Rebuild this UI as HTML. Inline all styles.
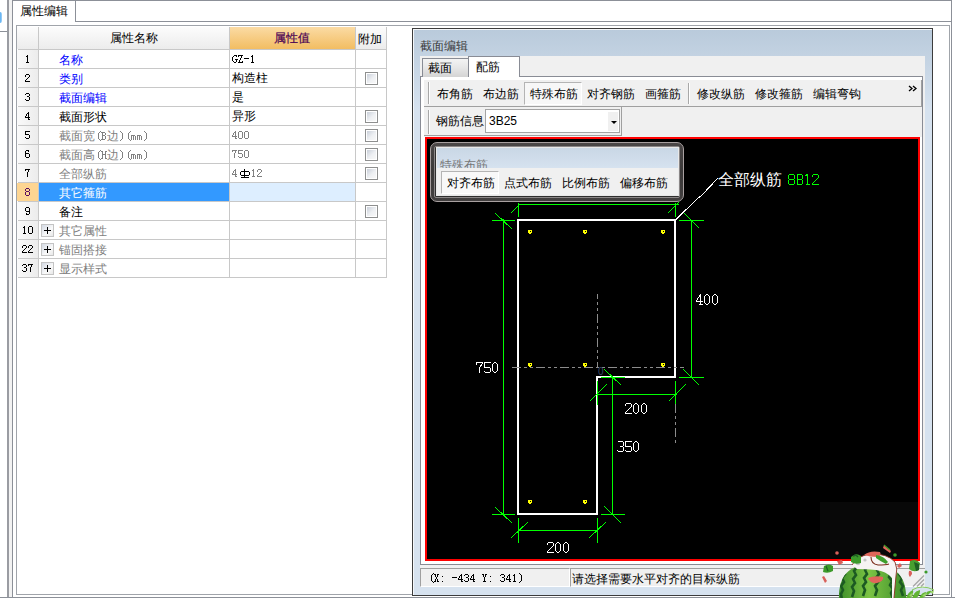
<!DOCTYPE html>
<html><head><meta charset="utf-8">
<style>
*{margin:0;padding:0;box-sizing:border-box}
html,body{width:955px;height:598px;overflow:hidden;background:#fff;position:relative}
.a{position:absolute}
.t{position:absolute;font-family:"Liberation Sans",sans-serif;font-size:12px;line-height:12px;white-space:nowrap;color:#000}
.m{position:absolute;font-family:"Liberation Mono",monospace;font-size:10px;line-height:12px;white-space:nowrap;color:#000}
.h{position:absolute;height:1px}
.v{position:absolute;width:1px}
.cb{position:absolute;width:13px;height:13px;border:1px solid #8e8f8f;background:#fff;padding:1px}.cb i{display:block;width:9px;height:9px;background:linear-gradient(135deg,#c9cfd9,#eef0f3 55%,#f8f8f8)}
</style></head><body>

<div class="v" style="left:7px;top:0px;height:598px;width:2px;background:#9a9ca2"></div>
<div class="a" style="left:9px;top:0px;width:3px;height:598px;background:#f2f2f2"></div>
<div class="v" style="left:12px;top:0px;height:598px;width:1px;background:#8c9098"></div>
<div class="h" style="left:0px;top:31px;width:7px;height:1px;background:#8c9098"></div>
<div class="a" style="left:0px;top:12px;width:2px;height:11px;background:linear-gradient(90deg,#46a4f0,#9ccff6);border-radius:0 2px 2px 0;opacity:0.9"></div>
<div class="h" style="left:0px;top:597px;width:955px;height:1px;background:#8c9098"></div>
<div class="h" style="left:12px;top:0px;width:940px;height:1px;background:#8c9098"></div>
<div class="v" style="left:951px;top:0px;height:598px;width:1px;background:#8c9098"></div>
<div class="v" style="left:75px;top:1px;height:21px;width:1px;background:#8c9098"></div>
<div class="h" style="left:75px;top:21px;width:877px;height:1px;background:#8c9098"></div>
<div class="t" style="left:20px;top:5px;">属性编辑</div>
<div class="a" style="left:16px;top:25px;width:934px;height:570px;border:1px solid #a0a4aa"></div>
<div class="a" style="left:17px;top:27px;width:21px;height:22px;background:linear-gradient(#fcfcfc,#ececec)"></div>
<div class="a" style="left:39px;top:27px;width:190px;height:22px;background:linear-gradient(#fcfcfc,#ececec)"></div>
<div class="a" style="left:230px;top:27px;width:125px;height:22px;background:linear-gradient(#fbdba4,#f2bd62)"></div>
<div class="a" style="left:356px;top:27px;width:30px;height:22px;background:linear-gradient(#fcfcfc,#ececec)"></div>
<div class="a" style="left:17px;top:50px;width:21px;height:18px;background:linear-gradient(90deg,#fafafa,#ececec)"></div>
<div class="a" style="left:17px;top:69px;width:21px;height:18px;background:linear-gradient(90deg,#fafafa,#ececec)"></div>
<div class="a" style="left:17px;top:88px;width:21px;height:18px;background:linear-gradient(90deg,#fafafa,#ececec)"></div>
<div class="a" style="left:17px;top:107px;width:21px;height:18px;background:linear-gradient(90deg,#fafafa,#ececec)"></div>
<div class="a" style="left:17px;top:126px;width:21px;height:18px;background:linear-gradient(90deg,#fafafa,#ececec)"></div>
<div class="a" style="left:17px;top:145px;width:21px;height:18px;background:linear-gradient(90deg,#fafafa,#ececec)"></div>
<div class="a" style="left:17px;top:164px;width:21px;height:18px;background:linear-gradient(90deg,#fafafa,#ececec)"></div>
<div class="a" style="left:17px;top:183px;width:21px;height:18px;background:linear-gradient(90deg,#fafafa,#ececec)"></div>
<div class="a" style="left:17px;top:202px;width:21px;height:18px;background:linear-gradient(90deg,#fafafa,#ececec)"></div>
<div class="a" style="left:17px;top:221px;width:21px;height:18px;background:linear-gradient(90deg,#fafafa,#ececec)"></div>
<div class="a" style="left:17px;top:240px;width:21px;height:18px;background:linear-gradient(90deg,#fafafa,#ececec)"></div>
<div class="a" style="left:17px;top:259px;width:21px;height:18px;background:linear-gradient(90deg,#fafafa,#ececec)"></div>
<div class="a" style="left:17px;top:183px;width:21px;height:18px;background:#fdd592"></div>
<div class="a" style="left:39px;top:183px;width:190px;height:18px;background:#3399ff"></div>
<div class="a" style="left:230px;top:183px;width:125px;height:18px;background:#ddeeff"></div>
<div class="h" style="left:18px;top:49px;width:368px;height:1px;background:#c8c8c8"></div>
<div class="h" style="left:18px;top:68px;width:368px;height:1px;background:#c8c8c8"></div>
<div class="h" style="left:18px;top:87px;width:368px;height:1px;background:#c8c8c8"></div>
<div class="h" style="left:18px;top:106px;width:368px;height:1px;background:#c8c8c8"></div>
<div class="h" style="left:18px;top:125px;width:368px;height:1px;background:#c8c8c8"></div>
<div class="h" style="left:18px;top:144px;width:368px;height:1px;background:#c8c8c8"></div>
<div class="h" style="left:18px;top:163px;width:368px;height:1px;background:#c8c8c8"></div>
<div class="h" style="left:18px;top:182px;width:368px;height:1px;background:#c8c8c8"></div>
<div class="h" style="left:18px;top:201px;width:368px;height:1px;background:#c8c8c8"></div>
<div class="h" style="left:18px;top:220px;width:368px;height:1px;background:#c8c8c8"></div>
<div class="h" style="left:18px;top:239px;width:368px;height:1px;background:#c8c8c8"></div>
<div class="h" style="left:18px;top:258px;width:368px;height:1px;background:#c8c8c8"></div>
<div class="h" style="left:18px;top:277px;width:368px;height:1px;background:#c8c8c8"></div>
<div class="v" style="left:38px;top:27px;height:251px;width:1px;background:#c8c8c8"></div>
<div class="v" style="left:229px;top:27px;height:251px;width:1px;background:#c8c8c8"></div>
<div class="v" style="left:355px;top:27px;height:251px;width:1px;background:#c8c8c8"></div>
<div class="v" style="left:386px;top:27px;height:251px;width:1px;background:#c8c8c8"></div>
<div class="t" style="left:110px;top:32px;">属性名称</div>
<div class="t" style="left:274px;top:32px;color:#4c0454;-webkit-text-stroke:0.2px #4c0454">属性值</div>
<div class="t" style="left:358px;top:33px;">附加</div>
<div class="t" style="left:59px;top:54px;color:#0000ff">名称</div>
<div class="t" style="left:59px;top:73px;color:#0000ff">类别</div>
<div class="t" style="left:232px;top:72px;color:#000">构造柱</div>
<div class="cb" style="left:365px;top:72px"><i></i></div>
<div class="t" style="left:59px;top:92px;color:#0000ff">截面编辑</div>
<div class="t" style="left:232px;top:91px;color:#000">是</div>
<div class="t" style="left:59px;top:111px;color:#000">截面形状</div>
<div class="t" style="left:232px;top:110px;color:#000">异形</div>
<div class="cb" style="left:365px;top:110px"><i></i></div>
<div class="t" style="left:59px;top:130px;color:#808080">截面宽</div>
<div class="t" style="left:107px;top:130px;color:#808080">边</div>
<div class="cb" style="left:365px;top:129px"><i></i></div>
<div class="t" style="left:59px;top:149px;color:#808080">截面高</div>
<div class="t" style="left:107px;top:149px;color:#808080">边</div>
<div class="cb" style="left:365px;top:148px"><i></i></div>
<div class="t" style="left:59px;top:168px;color:#808080">全部纵筋</div>
<div class="cb" style="left:365px;top:167px"><i></i></div>
<div class="t" style="left:59px;top:187px;color:#fff">其它箍筋</div>
<div class="t" style="left:59px;top:206px;color:#000">备注</div>
<div class="cb" style="left:365px;top:205px"><i></i></div>
<div class="t" style="left:59px;top:225px;color:#808080">其它属性</div>
<div class="a" style="left:41px;top:224px;width:13px;height:13px;border:1px solid #c4c4c4;background:linear-gradient(135deg,#d2d8e2,#fafafa 60%,#e8e8e8)"></div>
<div class="t" style="left:59px;top:244px;color:#808080">锚固搭接</div>
<div class="a" style="left:41px;top:243px;width:13px;height:13px;border:1px solid #c4c4c4;background:linear-gradient(135deg,#d2d8e2,#fafafa 60%,#e8e8e8)"></div>
<div class="t" style="left:59px;top:263px;color:#808080">显示样式</div>
<div class="a" style="left:41px;top:262px;width:13px;height:13px;border:1px solid #c4c4c4;background:linear-gradient(135deg,#d2d8e2,#fafafa 60%,#e8e8e8)"></div>
<svg class="a" style="left:0;top:0" width="955" height="598" shape-rendering="crispEdges"><g fill="#000"><rect x="27" y="55" width="1" height="1"/><rect x="26" y="56" width="1" height="1"/><rect x="27" y="56" width="1" height="1"/><rect x="27" y="57" width="1" height="1"/><rect x="27" y="58" width="1" height="1"/><rect x="27" y="59" width="1" height="1"/><rect x="27" y="60" width="1" height="1"/><rect x="27" y="61" width="1" height="1"/><rect x="26" y="62" width="1" height="1"/><rect x="27" y="62" width="1" height="1"/><rect x="28" y="62" width="1" height="1"/></g><g fill="#000"><rect x="234" y="55" width="1" height="1"/><rect x="235" y="55" width="1" height="1"/><rect x="236" y="55" width="1" height="1"/><rect x="233" y="56" width="1" height="1"/><rect x="236" y="56" width="1" height="1"/><rect x="232" y="57" width="1" height="1"/><rect x="232" y="58" width="1" height="1"/><rect x="232" y="59" width="1" height="1"/><rect x="235" y="59" width="1" height="1"/><rect x="236" y="59" width="1" height="1"/><rect x="237" y="59" width="1" height="1"/><rect x="232" y="60" width="1" height="1"/><rect x="236" y="60" width="1" height="1"/><rect x="233" y="61" width="1" height="1"/><rect x="236" y="61" width="1" height="1"/><rect x="234" y="62" width="1" height="1"/><rect x="235" y="62" width="1" height="1"/></g><g fill="#000"><rect x="238" y="55" width="1" height="1"/><rect x="239" y="55" width="1" height="1"/><rect x="240" y="55" width="1" height="1"/><rect x="241" y="55" width="1" height="1"/><rect x="242" y="55" width="1" height="1"/><rect x="238" y="56" width="1" height="1"/><rect x="241" y="56" width="1" height="1"/><rect x="241" y="57" width="1" height="1"/><rect x="240" y="58" width="1" height="1"/><rect x="240" y="59" width="1" height="1"/><rect x="239" y="60" width="1" height="1"/><rect x="239" y="61" width="1" height="1"/><rect x="242" y="61" width="1" height="1"/><rect x="238" y="62" width="1" height="1"/><rect x="239" y="62" width="1" height="1"/><rect x="240" y="62" width="1" height="1"/><rect x="241" y="62" width="1" height="1"/><rect x="242" y="62" width="1" height="1"/></g><g fill="#000"><rect x="244" y="58" width="1" height="1"/><rect x="245" y="58" width="1" height="1"/><rect x="246" y="58" width="1" height="1"/><rect x="247" y="58" width="1" height="1"/><rect x="248" y="58" width="1" height="1"/></g><g fill="#000"><rect x="252" y="55" width="1" height="1"/><rect x="251" y="56" width="1" height="1"/><rect x="252" y="56" width="1" height="1"/><rect x="252" y="57" width="1" height="1"/><rect x="252" y="58" width="1" height="1"/><rect x="252" y="59" width="1" height="1"/><rect x="252" y="60" width="1" height="1"/><rect x="252" y="61" width="1" height="1"/><rect x="251" y="62" width="1" height="1"/><rect x="252" y="62" width="1" height="1"/><rect x="253" y="62" width="1" height="1"/></g><g fill="#000"><rect x="26" y="74" width="1" height="1"/><rect x="27" y="74" width="1" height="1"/><rect x="28" y="74" width="1" height="1"/><rect x="25" y="75" width="1" height="1"/><rect x="29" y="75" width="1" height="1"/><rect x="25" y="76" width="1" height="1"/><rect x="29" y="76" width="1" height="1"/><rect x="28" y="77" width="1" height="1"/><rect x="27" y="78" width="1" height="1"/><rect x="26" y="79" width="1" height="1"/><rect x="25" y="80" width="1" height="1"/><rect x="25" y="81" width="1" height="1"/><rect x="26" y="81" width="1" height="1"/><rect x="27" y="81" width="1" height="1"/><rect x="28" y="81" width="1" height="1"/><rect x="29" y="81" width="1" height="1"/></g><g fill="#000"><rect x="26" y="93" width="1" height="1"/><rect x="27" y="93" width="1" height="1"/><rect x="28" y="93" width="1" height="1"/><rect x="25" y="94" width="1" height="1"/><rect x="29" y="94" width="1" height="1"/><rect x="29" y="95" width="1" height="1"/><rect x="27" y="96" width="1" height="1"/><rect x="28" y="96" width="1" height="1"/><rect x="29" y="97" width="1" height="1"/><rect x="29" y="98" width="1" height="1"/><rect x="25" y="99" width="1" height="1"/><rect x="29" y="99" width="1" height="1"/><rect x="26" y="100" width="1" height="1"/><rect x="27" y="100" width="1" height="1"/><rect x="28" y="100" width="1" height="1"/></g><g fill="#000"><rect x="28" y="112" width="1" height="1"/><rect x="27" y="113" width="1" height="1"/><rect x="28" y="113" width="1" height="1"/><rect x="26" y="114" width="1" height="1"/><rect x="28" y="114" width="1" height="1"/><rect x="26" y="115" width="1" height="1"/><rect x="28" y="115" width="1" height="1"/><rect x="25" y="116" width="1" height="1"/><rect x="28" y="116" width="1" height="1"/><rect x="25" y="117" width="1" height="1"/><rect x="26" y="117" width="1" height="1"/><rect x="27" y="117" width="1" height="1"/><rect x="28" y="117" width="1" height="1"/><rect x="29" y="117" width="1" height="1"/><rect x="28" y="118" width="1" height="1"/><rect x="28" y="119" width="1" height="1"/><rect x="29" y="119" width="1" height="1"/></g><g fill="#000"><rect x="25" y="131" width="1" height="1"/><rect x="26" y="131" width="1" height="1"/><rect x="27" y="131" width="1" height="1"/><rect x="28" y="131" width="1" height="1"/><rect x="29" y="131" width="1" height="1"/><rect x="25" y="132" width="1" height="1"/><rect x="25" y="133" width="1" height="1"/><rect x="25" y="134" width="1" height="1"/><rect x="26" y="134" width="1" height="1"/><rect x="27" y="134" width="1" height="1"/><rect x="28" y="134" width="1" height="1"/><rect x="29" y="135" width="1" height="1"/><rect x="29" y="136" width="1" height="1"/><rect x="25" y="137" width="1" height="1"/><rect x="29" y="137" width="1" height="1"/><rect x="26" y="138" width="1" height="1"/><rect x="27" y="138" width="1" height="1"/><rect x="28" y="138" width="1" height="1"/></g><g fill="#808080"><rect x="100" y="131" width="1" height="1"/><rect x="99" y="132" width="1" height="1"/><rect x="98" y="133" width="1" height="1"/><rect x="98" y="134" width="1" height="1"/><rect x="98" y="135" width="1" height="1"/><rect x="98" y="136" width="1" height="1"/><rect x="98" y="137" width="1" height="1"/><rect x="98" y="138" width="1" height="1"/><rect x="99" y="139" width="1" height="1"/><rect x="100" y="140" width="1" height="1"/><rect x="101" y="132" width="1" height="1"/><rect x="102" y="132" width="1" height="1"/><rect x="103" y="132" width="1" height="1"/><rect x="104" y="132" width="1" height="1"/><rect x="102" y="133" width="1" height="1"/><rect x="105" y="133" width="1" height="1"/><rect x="102" y="134" width="1" height="1"/><rect x="105" y="134" width="1" height="1"/><rect x="102" y="135" width="1" height="1"/><rect x="103" y="135" width="1" height="1"/><rect x="104" y="135" width="1" height="1"/><rect x="102" y="136" width="1" height="1"/><rect x="105" y="136" width="1" height="1"/><rect x="102" y="137" width="1" height="1"/><rect x="105" y="137" width="1" height="1"/><rect x="102" y="138" width="1" height="1"/><rect x="105" y="138" width="1" height="1"/><rect x="101" y="139" width="1" height="1"/><rect x="102" y="139" width="1" height="1"/><rect x="103" y="139" width="1" height="1"/><rect x="104" y="139" width="1" height="1"/></g><g fill="#808080"><rect x="120" y="131" width="1" height="1"/><rect x="121" y="132" width="1" height="1"/><rect x="122" y="133" width="1" height="1"/><rect x="122" y="134" width="1" height="1"/><rect x="122" y="135" width="1" height="1"/><rect x="122" y="136" width="1" height="1"/><rect x="122" y="137" width="1" height="1"/><rect x="122" y="138" width="1" height="1"/><rect x="121" y="139" width="1" height="1"/><rect x="120" y="140" width="1" height="1"/><rect x="130" y="131" width="1" height="1"/><rect x="129" y="132" width="1" height="1"/><rect x="128" y="133" width="1" height="1"/><rect x="128" y="134" width="1" height="1"/><rect x="128" y="135" width="1" height="1"/><rect x="128" y="136" width="1" height="1"/><rect x="128" y="137" width="1" height="1"/><rect x="128" y="138" width="1" height="1"/><rect x="129" y="139" width="1" height="1"/><rect x="130" y="140" width="1" height="1"/><rect x="131" y="135" width="1" height="1"/><rect x="132" y="135" width="1" height="1"/><rect x="133" y="135" width="1" height="1"/><rect x="134" y="135" width="1" height="1"/><rect x="131" y="136" width="1" height="1"/><rect x="133" y="136" width="1" height="1"/><rect x="135" y="136" width="1" height="1"/><rect x="131" y="137" width="1" height="1"/><rect x="133" y="137" width="1" height="1"/><rect x="135" y="137" width="1" height="1"/><rect x="131" y="138" width="1" height="1"/><rect x="133" y="138" width="1" height="1"/><rect x="135" y="138" width="1" height="1"/><rect x="131" y="139" width="1" height="1"/><rect x="133" y="139" width="1" height="1"/><rect x="135" y="139" width="1" height="1"/><rect x="137" y="135" width="1" height="1"/><rect x="138" y="135" width="1" height="1"/><rect x="139" y="135" width="1" height="1"/><rect x="140" y="135" width="1" height="1"/><rect x="137" y="136" width="1" height="1"/><rect x="139" y="136" width="1" height="1"/><rect x="141" y="136" width="1" height="1"/><rect x="137" y="137" width="1" height="1"/><rect x="139" y="137" width="1" height="1"/><rect x="141" y="137" width="1" height="1"/><rect x="137" y="138" width="1" height="1"/><rect x="139" y="138" width="1" height="1"/><rect x="141" y="138" width="1" height="1"/><rect x="137" y="139" width="1" height="1"/><rect x="139" y="139" width="1" height="1"/><rect x="141" y="139" width="1" height="1"/><rect x="144" y="131" width="1" height="1"/><rect x="145" y="132" width="1" height="1"/><rect x="146" y="133" width="1" height="1"/><rect x="146" y="134" width="1" height="1"/><rect x="146" y="135" width="1" height="1"/><rect x="146" y="136" width="1" height="1"/><rect x="146" y="137" width="1" height="1"/><rect x="146" y="138" width="1" height="1"/><rect x="145" y="139" width="1" height="1"/><rect x="144" y="140" width="1" height="1"/></g><g fill="#808080"><rect x="235" y="131" width="1" height="1"/><rect x="234" y="132" width="1" height="1"/><rect x="235" y="132" width="1" height="1"/><rect x="233" y="133" width="1" height="1"/><rect x="235" y="133" width="1" height="1"/><rect x="233" y="134" width="1" height="1"/><rect x="235" y="134" width="1" height="1"/><rect x="232" y="135" width="1" height="1"/><rect x="235" y="135" width="1" height="1"/><rect x="232" y="136" width="1" height="1"/><rect x="233" y="136" width="1" height="1"/><rect x="234" y="136" width="1" height="1"/><rect x="235" y="136" width="1" height="1"/><rect x="236" y="136" width="1" height="1"/><rect x="235" y="137" width="1" height="1"/><rect x="235" y="138" width="1" height="1"/><rect x="236" y="138" width="1" height="1"/><rect x="239" y="131" width="1" height="1"/><rect x="240" y="131" width="1" height="1"/><rect x="241" y="131" width="1" height="1"/><rect x="238" y="132" width="1" height="1"/><rect x="242" y="132" width="1" height="1"/><rect x="238" y="133" width="1" height="1"/><rect x="242" y="133" width="1" height="1"/><rect x="238" y="134" width="1" height="1"/><rect x="242" y="134" width="1" height="1"/><rect x="238" y="135" width="1" height="1"/><rect x="242" y="135" width="1" height="1"/><rect x="238" y="136" width="1" height="1"/><rect x="242" y="136" width="1" height="1"/><rect x="238" y="137" width="1" height="1"/><rect x="242" y="137" width="1" height="1"/><rect x="239" y="138" width="1" height="1"/><rect x="240" y="138" width="1" height="1"/><rect x="241" y="138" width="1" height="1"/><rect x="245" y="131" width="1" height="1"/><rect x="246" y="131" width="1" height="1"/><rect x="247" y="131" width="1" height="1"/><rect x="244" y="132" width="1" height="1"/><rect x="248" y="132" width="1" height="1"/><rect x="244" y="133" width="1" height="1"/><rect x="248" y="133" width="1" height="1"/><rect x="244" y="134" width="1" height="1"/><rect x="248" y="134" width="1" height="1"/><rect x="244" y="135" width="1" height="1"/><rect x="248" y="135" width="1" height="1"/><rect x="244" y="136" width="1" height="1"/><rect x="248" y="136" width="1" height="1"/><rect x="244" y="137" width="1" height="1"/><rect x="248" y="137" width="1" height="1"/><rect x="245" y="138" width="1" height="1"/><rect x="246" y="138" width="1" height="1"/><rect x="247" y="138" width="1" height="1"/></g><g fill="#000"><rect x="26" y="150" width="1" height="1"/><rect x="27" y="150" width="1" height="1"/><rect x="28" y="150" width="1" height="1"/><rect x="25" y="151" width="1" height="1"/><rect x="28" y="151" width="1" height="1"/><rect x="25" y="152" width="1" height="1"/><rect x="25" y="153" width="1" height="1"/><rect x="26" y="153" width="1" height="1"/><rect x="27" y="153" width="1" height="1"/><rect x="28" y="153" width="1" height="1"/><rect x="25" y="154" width="1" height="1"/><rect x="29" y="154" width="1" height="1"/><rect x="25" y="155" width="1" height="1"/><rect x="29" y="155" width="1" height="1"/><rect x="25" y="156" width="1" height="1"/><rect x="29" y="156" width="1" height="1"/><rect x="26" y="157" width="1" height="1"/><rect x="27" y="157" width="1" height="1"/><rect x="28" y="157" width="1" height="1"/></g><g fill="#808080"><rect x="100" y="150" width="1" height="1"/><rect x="99" y="151" width="1" height="1"/><rect x="98" y="152" width="1" height="1"/><rect x="98" y="153" width="1" height="1"/><rect x="98" y="154" width="1" height="1"/><rect x="98" y="155" width="1" height="1"/><rect x="98" y="156" width="1" height="1"/><rect x="98" y="157" width="1" height="1"/><rect x="99" y="158" width="1" height="1"/><rect x="100" y="159" width="1" height="1"/><rect x="101" y="151" width="1" height="1"/><rect x="102" y="151" width="1" height="1"/><rect x="105" y="151" width="1" height="1"/><rect x="106" y="151" width="1" height="1"/><rect x="102" y="152" width="1" height="1"/><rect x="105" y="152" width="1" height="1"/><rect x="102" y="153" width="1" height="1"/><rect x="105" y="153" width="1" height="1"/><rect x="102" y="154" width="1" height="1"/><rect x="103" y="154" width="1" height="1"/><rect x="104" y="154" width="1" height="1"/><rect x="105" y="154" width="1" height="1"/><rect x="102" y="155" width="1" height="1"/><rect x="105" y="155" width="1" height="1"/><rect x="102" y="156" width="1" height="1"/><rect x="105" y="156" width="1" height="1"/><rect x="102" y="157" width="1" height="1"/><rect x="105" y="157" width="1" height="1"/><rect x="101" y="158" width="1" height="1"/><rect x="102" y="158" width="1" height="1"/><rect x="105" y="158" width="1" height="1"/><rect x="106" y="158" width="1" height="1"/></g><g fill="#808080"><rect x="120" y="150" width="1" height="1"/><rect x="121" y="151" width="1" height="1"/><rect x="122" y="152" width="1" height="1"/><rect x="122" y="153" width="1" height="1"/><rect x="122" y="154" width="1" height="1"/><rect x="122" y="155" width="1" height="1"/><rect x="122" y="156" width="1" height="1"/><rect x="122" y="157" width="1" height="1"/><rect x="121" y="158" width="1" height="1"/><rect x="120" y="159" width="1" height="1"/><rect x="130" y="150" width="1" height="1"/><rect x="129" y="151" width="1" height="1"/><rect x="128" y="152" width="1" height="1"/><rect x="128" y="153" width="1" height="1"/><rect x="128" y="154" width="1" height="1"/><rect x="128" y="155" width="1" height="1"/><rect x="128" y="156" width="1" height="1"/><rect x="128" y="157" width="1" height="1"/><rect x="129" y="158" width="1" height="1"/><rect x="130" y="159" width="1" height="1"/><rect x="131" y="154" width="1" height="1"/><rect x="132" y="154" width="1" height="1"/><rect x="133" y="154" width="1" height="1"/><rect x="134" y="154" width="1" height="1"/><rect x="131" y="155" width="1" height="1"/><rect x="133" y="155" width="1" height="1"/><rect x="135" y="155" width="1" height="1"/><rect x="131" y="156" width="1" height="1"/><rect x="133" y="156" width="1" height="1"/><rect x="135" y="156" width="1" height="1"/><rect x="131" y="157" width="1" height="1"/><rect x="133" y="157" width="1" height="1"/><rect x="135" y="157" width="1" height="1"/><rect x="131" y="158" width="1" height="1"/><rect x="133" y="158" width="1" height="1"/><rect x="135" y="158" width="1" height="1"/><rect x="137" y="154" width="1" height="1"/><rect x="138" y="154" width="1" height="1"/><rect x="139" y="154" width="1" height="1"/><rect x="140" y="154" width="1" height="1"/><rect x="137" y="155" width="1" height="1"/><rect x="139" y="155" width="1" height="1"/><rect x="141" y="155" width="1" height="1"/><rect x="137" y="156" width="1" height="1"/><rect x="139" y="156" width="1" height="1"/><rect x="141" y="156" width="1" height="1"/><rect x="137" y="157" width="1" height="1"/><rect x="139" y="157" width="1" height="1"/><rect x="141" y="157" width="1" height="1"/><rect x="137" y="158" width="1" height="1"/><rect x="139" y="158" width="1" height="1"/><rect x="141" y="158" width="1" height="1"/><rect x="144" y="150" width="1" height="1"/><rect x="145" y="151" width="1" height="1"/><rect x="146" y="152" width="1" height="1"/><rect x="146" y="153" width="1" height="1"/><rect x="146" y="154" width="1" height="1"/><rect x="146" y="155" width="1" height="1"/><rect x="146" y="156" width="1" height="1"/><rect x="146" y="157" width="1" height="1"/><rect x="145" y="158" width="1" height="1"/><rect x="144" y="159" width="1" height="1"/></g><g fill="#808080"><rect x="232" y="150" width="1" height="1"/><rect x="233" y="150" width="1" height="1"/><rect x="234" y="150" width="1" height="1"/><rect x="235" y="150" width="1" height="1"/><rect x="236" y="150" width="1" height="1"/><rect x="232" y="151" width="1" height="1"/><rect x="235" y="151" width="1" height="1"/><rect x="235" y="152" width="1" height="1"/><rect x="234" y="153" width="1" height="1"/><rect x="234" y="154" width="1" height="1"/><rect x="234" y="155" width="1" height="1"/><rect x="234" y="156" width="1" height="1"/><rect x="234" y="157" width="1" height="1"/><rect x="238" y="150" width="1" height="1"/><rect x="239" y="150" width="1" height="1"/><rect x="240" y="150" width="1" height="1"/><rect x="241" y="150" width="1" height="1"/><rect x="242" y="150" width="1" height="1"/><rect x="238" y="151" width="1" height="1"/><rect x="238" y="152" width="1" height="1"/><rect x="238" y="153" width="1" height="1"/><rect x="239" y="153" width="1" height="1"/><rect x="240" y="153" width="1" height="1"/><rect x="241" y="153" width="1" height="1"/><rect x="242" y="154" width="1" height="1"/><rect x="242" y="155" width="1" height="1"/><rect x="238" y="156" width="1" height="1"/><rect x="242" y="156" width="1" height="1"/><rect x="239" y="157" width="1" height="1"/><rect x="240" y="157" width="1" height="1"/><rect x="241" y="157" width="1" height="1"/><rect x="245" y="150" width="1" height="1"/><rect x="246" y="150" width="1" height="1"/><rect x="247" y="150" width="1" height="1"/><rect x="244" y="151" width="1" height="1"/><rect x="248" y="151" width="1" height="1"/><rect x="244" y="152" width="1" height="1"/><rect x="248" y="152" width="1" height="1"/><rect x="244" y="153" width="1" height="1"/><rect x="248" y="153" width="1" height="1"/><rect x="244" y="154" width="1" height="1"/><rect x="248" y="154" width="1" height="1"/><rect x="244" y="155" width="1" height="1"/><rect x="248" y="155" width="1" height="1"/><rect x="244" y="156" width="1" height="1"/><rect x="248" y="156" width="1" height="1"/><rect x="245" y="157" width="1" height="1"/><rect x="246" y="157" width="1" height="1"/><rect x="247" y="157" width="1" height="1"/></g><g fill="#000"><rect x="25" y="169" width="1" height="1"/><rect x="26" y="169" width="1" height="1"/><rect x="27" y="169" width="1" height="1"/><rect x="28" y="169" width="1" height="1"/><rect x="29" y="169" width="1" height="1"/><rect x="25" y="170" width="1" height="1"/><rect x="28" y="170" width="1" height="1"/><rect x="28" y="171" width="1" height="1"/><rect x="27" y="172" width="1" height="1"/><rect x="27" y="173" width="1" height="1"/><rect x="27" y="174" width="1" height="1"/><rect x="27" y="175" width="1" height="1"/><rect x="27" y="176" width="1" height="1"/></g><g fill="#808080"><rect x="235" y="169" width="1" height="1"/><rect x="234" y="170" width="1" height="1"/><rect x="235" y="170" width="1" height="1"/><rect x="233" y="171" width="1" height="1"/><rect x="235" y="171" width="1" height="1"/><rect x="233" y="172" width="1" height="1"/><rect x="235" y="172" width="1" height="1"/><rect x="232" y="173" width="1" height="1"/><rect x="235" y="173" width="1" height="1"/><rect x="232" y="174" width="1" height="1"/><rect x="233" y="174" width="1" height="1"/><rect x="234" y="174" width="1" height="1"/><rect x="235" y="174" width="1" height="1"/><rect x="236" y="174" width="1" height="1"/><rect x="235" y="175" width="1" height="1"/><rect x="235" y="176" width="1" height="1"/><rect x="236" y="176" width="1" height="1"/></g><g fill="#808080"><rect x="253" y="169" width="1" height="1"/><rect x="252" y="170" width="1" height="1"/><rect x="253" y="170" width="1" height="1"/><rect x="253" y="171" width="1" height="1"/><rect x="253" y="172" width="1" height="1"/><rect x="253" y="173" width="1" height="1"/><rect x="253" y="174" width="1" height="1"/><rect x="253" y="175" width="1" height="1"/><rect x="252" y="176" width="1" height="1"/><rect x="253" y="176" width="1" height="1"/><rect x="254" y="176" width="1" height="1"/><rect x="258" y="169" width="1" height="1"/><rect x="259" y="169" width="1" height="1"/><rect x="260" y="169" width="1" height="1"/><rect x="257" y="170" width="1" height="1"/><rect x="261" y="170" width="1" height="1"/><rect x="257" y="171" width="1" height="1"/><rect x="261" y="171" width="1" height="1"/><rect x="260" y="172" width="1" height="1"/><rect x="259" y="173" width="1" height="1"/><rect x="258" y="174" width="1" height="1"/><rect x="257" y="175" width="1" height="1"/><rect x="257" y="176" width="1" height="1"/><rect x="258" y="176" width="1" height="1"/><rect x="259" y="176" width="1" height="1"/><rect x="260" y="176" width="1" height="1"/><rect x="261" y="176" width="1" height="1"/></g><g fill="#000"><rect x="244" y="169" width="1" height="9"/><rect x="241" y="171" width="8" height="1"/><rect x="240" y="172" width="1" height="3"/><rect x="249" y="172" width="1" height="3"/><rect x="241" y="175" width="8" height="1"/><rect x="241" y="177" width="8" height="1"/></g><g fill="#5a0c5e"><rect x="26" y="188" width="1" height="1"/><rect x="27" y="188" width="1" height="1"/><rect x="28" y="188" width="1" height="1"/><rect x="25" y="189" width="1" height="1"/><rect x="29" y="189" width="1" height="1"/><rect x="25" y="190" width="1" height="1"/><rect x="29" y="190" width="1" height="1"/><rect x="26" y="191" width="1" height="1"/><rect x="27" y="191" width="1" height="1"/><rect x="28" y="191" width="1" height="1"/><rect x="25" y="192" width="1" height="1"/><rect x="29" y="192" width="1" height="1"/><rect x="25" y="193" width="1" height="1"/><rect x="29" y="193" width="1" height="1"/><rect x="25" y="194" width="1" height="1"/><rect x="29" y="194" width="1" height="1"/><rect x="26" y="195" width="1" height="1"/><rect x="27" y="195" width="1" height="1"/><rect x="28" y="195" width="1" height="1"/></g><g fill="#000"><rect x="26" y="207" width="1" height="1"/><rect x="27" y="207" width="1" height="1"/><rect x="28" y="207" width="1" height="1"/><rect x="25" y="208" width="1" height="1"/><rect x="29" y="208" width="1" height="1"/><rect x="25" y="209" width="1" height="1"/><rect x="29" y="209" width="1" height="1"/><rect x="25" y="210" width="1" height="1"/><rect x="29" y="210" width="1" height="1"/><rect x="26" y="211" width="1" height="1"/><rect x="27" y="211" width="1" height="1"/><rect x="28" y="211" width="1" height="1"/><rect x="29" y="211" width="1" height="1"/><rect x="29" y="212" width="1" height="1"/><rect x="26" y="213" width="1" height="1"/><rect x="29" y="213" width="1" height="1"/><rect x="26" y="214" width="1" height="1"/><rect x="27" y="214" width="1" height="1"/><rect x="28" y="214" width="1" height="1"/></g><g fill="#000"><rect x="24" y="226" width="1" height="1"/><rect x="23" y="227" width="1" height="1"/><rect x="24" y="227" width="1" height="1"/><rect x="24" y="228" width="1" height="1"/><rect x="24" y="229" width="1" height="1"/><rect x="24" y="230" width="1" height="1"/><rect x="24" y="231" width="1" height="1"/><rect x="24" y="232" width="1" height="1"/><rect x="23" y="233" width="1" height="1"/><rect x="24" y="233" width="1" height="1"/><rect x="25" y="233" width="1" height="1"/><rect x="29" y="226" width="1" height="1"/><rect x="30" y="226" width="1" height="1"/><rect x="31" y="226" width="1" height="1"/><rect x="28" y="227" width="1" height="1"/><rect x="32" y="227" width="1" height="1"/><rect x="28" y="228" width="1" height="1"/><rect x="32" y="228" width="1" height="1"/><rect x="28" y="229" width="1" height="1"/><rect x="32" y="229" width="1" height="1"/><rect x="28" y="230" width="1" height="1"/><rect x="32" y="230" width="1" height="1"/><rect x="28" y="231" width="1" height="1"/><rect x="32" y="231" width="1" height="1"/><rect x="28" y="232" width="1" height="1"/><rect x="32" y="232" width="1" height="1"/><rect x="29" y="233" width="1" height="1"/><rect x="30" y="233" width="1" height="1"/><rect x="31" y="233" width="1" height="1"/></g><g fill="#000"><rect x="44" y="230" width="7" height="1"/><rect x="47" y="227" width="1" height="7"/></g><g fill="#000"><rect x="23" y="245" width="1" height="1"/><rect x="24" y="245" width="1" height="1"/><rect x="25" y="245" width="1" height="1"/><rect x="22" y="246" width="1" height="1"/><rect x="26" y="246" width="1" height="1"/><rect x="22" y="247" width="1" height="1"/><rect x="26" y="247" width="1" height="1"/><rect x="25" y="248" width="1" height="1"/><rect x="24" y="249" width="1" height="1"/><rect x="23" y="250" width="1" height="1"/><rect x="22" y="251" width="1" height="1"/><rect x="22" y="252" width="1" height="1"/><rect x="23" y="252" width="1" height="1"/><rect x="24" y="252" width="1" height="1"/><rect x="25" y="252" width="1" height="1"/><rect x="26" y="252" width="1" height="1"/><rect x="29" y="245" width="1" height="1"/><rect x="30" y="245" width="1" height="1"/><rect x="31" y="245" width="1" height="1"/><rect x="28" y="246" width="1" height="1"/><rect x="32" y="246" width="1" height="1"/><rect x="28" y="247" width="1" height="1"/><rect x="32" y="247" width="1" height="1"/><rect x="31" y="248" width="1" height="1"/><rect x="30" y="249" width="1" height="1"/><rect x="29" y="250" width="1" height="1"/><rect x="28" y="251" width="1" height="1"/><rect x="28" y="252" width="1" height="1"/><rect x="29" y="252" width="1" height="1"/><rect x="30" y="252" width="1" height="1"/><rect x="31" y="252" width="1" height="1"/><rect x="32" y="252" width="1" height="1"/></g><g fill="#000"><rect x="44" y="249" width="7" height="1"/><rect x="47" y="246" width="1" height="7"/></g><g fill="#000"><rect x="23" y="264" width="1" height="1"/><rect x="24" y="264" width="1" height="1"/><rect x="25" y="264" width="1" height="1"/><rect x="22" y="265" width="1" height="1"/><rect x="26" y="265" width="1" height="1"/><rect x="26" y="266" width="1" height="1"/><rect x="24" y="267" width="1" height="1"/><rect x="25" y="267" width="1" height="1"/><rect x="26" y="268" width="1" height="1"/><rect x="26" y="269" width="1" height="1"/><rect x="22" y="270" width="1" height="1"/><rect x="26" y="270" width="1" height="1"/><rect x="23" y="271" width="1" height="1"/><rect x="24" y="271" width="1" height="1"/><rect x="25" y="271" width="1" height="1"/><rect x="28" y="264" width="1" height="1"/><rect x="29" y="264" width="1" height="1"/><rect x="30" y="264" width="1" height="1"/><rect x="31" y="264" width="1" height="1"/><rect x="32" y="264" width="1" height="1"/><rect x="28" y="265" width="1" height="1"/><rect x="31" y="265" width="1" height="1"/><rect x="31" y="266" width="1" height="1"/><rect x="30" y="267" width="1" height="1"/><rect x="30" y="268" width="1" height="1"/><rect x="30" y="269" width="1" height="1"/><rect x="30" y="270" width="1" height="1"/><rect x="30" y="271" width="1" height="1"/></g><g fill="#000"><rect x="44" y="268" width="7" height="1"/><rect x="47" y="265" width="1" height="7"/></g></svg>
<div class="a" style="left:412px;top:28px;width:521px;height:568px;border:1px solid #3c3c3c;background:linear-gradient(#b9cadb,#d6e2ef 80px,#d6e2ef);box-shadow:inset 1px 1px 0 #f4f7fa"></div>
<div class="t" style="left:420px;top:40px;color:#3a3a3a">截面编辑</div>
<div class="a" style="left:420px;top:56px;width:505px;height:531px;background:#f0f0f0"></div>
<div class="a" style="left:420px;top:76px;width:503px;height:489px;background:#fff;border:1px solid #898c95"></div>
<div class="a" style="left:422px;top:58px;width:47px;height:19px;border:1px solid #898c95;border-bottom:none;background:linear-gradient(#f4f4f4,#e6e6e6 50%,#d4d4d4)"></div>
<div class="a" style="left:468px;top:56px;width:52px;height:21px;border:1px solid #898c95;border-bottom:none;background:#fff"></div>
<div class="a" style="left:469px;top:76px;width:50px;height:1px;background:#fff"></div>
<div class="t" style="left:428px;top:62px;">截面</div>
<div class="t" style="left:476px;top:61px;">配筋</div>
<div class="a" style="left:424px;top:80px;width:498px;height:57px;background:#f0f0f0"></div>
<div class="a" style="left:424px;top:80px;width:498px;height:27px;background:#f0f0f0;border-right:1px solid #a0a0a0;border-bottom:1px solid #a0a0a0"></div>
<div class="v" style="left:428px;top:82px;height:22px;width:1px;background:#a8a8a8"></div>
<div class="v" style="left:429px;top:82px;height:22px;width:1px;background:#fff"></div>
<div class="a" style="left:524px;top:82px;width:58px;height:23px;border:1px solid #b4b4b4;border-right-color:#fff;border-bottom-color:#fff;background:#f7f7f7"></div>
<div class="t" style="left:437px;top:88px;">布角筋</div>
<div class="t" style="left:483px;top:88px;">布边筋</div>
<div class="t" style="left:530px;top:88px;">特殊布筋</div>
<div class="t" style="left:587px;top:88px;">对齐钢筋</div>
<div class="t" style="left:645px;top:88px;">画箍筋</div>
<div class="t" style="left:697px;top:88px;">修改纵筋</div>
<div class="t" style="left:755px;top:88px;">修改箍筋</div>
<div class="t" style="left:813px;top:88px;">编辑弯钩</div>
<div class="v" style="left:688px;top:83px;height:21px;width:1px;background:#a8a8a8"></div>
<div class="v" style="left:689px;top:83px;height:21px;width:1px;background:#fff"></div>
<svg class="a" style="left:908px;top:85px" width="10" height="8"><path d="M1 1 L4 3.5 L1 6 M5 1 L8 3.5 L5 6" fill="none" stroke="#000" stroke-width="1.3"/></svg>
<div class="a" style="left:424px;top:107px;width:198px;height:29px;background:#f0f0f0;border-right:1px solid #a0a0a0;border-bottom:1px solid #a0a0a0"></div>
<div class="v" style="left:428px;top:110px;height:24px;width:1px;background:#a8a8a8"></div>
<div class="v" style="left:429px;top:110px;height:24px;width:1px;background:#fff"></div>
<div class="t" style="left:436px;top:115px;">钢筋信息</div>
<div class="a" style="left:485px;top:109px;width:135px;height:24px;background:#fff;border:1px solid #a4a4a4"></div>
<div class="a" style="left:608px;top:112px;width:10px;height:19px;background:#f0f0f0"></div>
<div class="a" style="left:611px;top:121px;width:0;height:0;border-left:3px solid transparent;border-right:3px solid transparent;border-top:3px solid #000"></div>
<div class="t" style="left:489px;top:115px;color:#000">3B25</div>
<div class="a" style="left:425px;top:137px;width:495px;height:424px;background:#000;border:2px solid #f00"></div>
<div class="a" style="left:420px;top:568px;width:150px;height:19px;border-top:1px solid #a0a0a0;border-left:1px solid #a0a0a0;border-right:1px solid #fff;border-bottom:1px solid #fff;background:#f0f0f0"></div>
<div class="a" style="left:570px;top:568px;width:355px;height:19px;border-top:1px solid #a0a0a0;border-left:1px solid #a0a0a0;border-bottom:1px solid #fff;background:#f0f0f0"></div>
<svg class="a" style="left:0;top:0" width="955" height="598" shape-rendering="crispEdges"><g fill="#000"><rect x="433" y="573" width="1" height="1"/><rect x="432" y="574" width="1" height="1"/><rect x="431" y="575" width="1" height="1"/><rect x="431" y="576" width="1" height="1"/><rect x="431" y="577" width="1" height="1"/><rect x="431" y="578" width="1" height="1"/><rect x="431" y="579" width="1" height="1"/><rect x="431" y="580" width="1" height="1"/><rect x="432" y="581" width="1" height="1"/><rect x="433" y="582" width="1" height="1"/><rect x="434" y="574" width="1" height="1"/><rect x="435" y="574" width="1" height="1"/><rect x="437" y="574" width="1" height="1"/><rect x="438" y="574" width="1" height="1"/><rect x="435" y="575" width="1" height="1"/><rect x="437" y="575" width="1" height="1"/><rect x="435" y="576" width="1" height="1"/><rect x="437" y="576" width="1" height="1"/><rect x="436" y="577" width="1" height="1"/><rect x="436" y="578" width="1" height="1"/><rect x="435" y="579" width="1" height="1"/><rect x="437" y="579" width="1" height="1"/><rect x="435" y="580" width="1" height="1"/><rect x="437" y="580" width="1" height="1"/><rect x="434" y="581" width="1" height="1"/><rect x="435" y="581" width="1" height="1"/><rect x="437" y="581" width="1" height="1"/><rect x="438" y="581" width="1" height="1"/><rect x="442" y="576" width="1" height="1"/><rect x="442" y="581" width="1" height="1"/><rect x="452" y="577" width="1" height="1"/><rect x="453" y="577" width="1" height="1"/><rect x="454" y="577" width="1" height="1"/><rect x="455" y="577" width="1" height="1"/><rect x="456" y="577" width="1" height="1"/><rect x="461" y="574" width="1" height="1"/><rect x="460" y="575" width="1" height="1"/><rect x="461" y="575" width="1" height="1"/><rect x="459" y="576" width="1" height="1"/><rect x="461" y="576" width="1" height="1"/><rect x="459" y="577" width="1" height="1"/><rect x="461" y="577" width="1" height="1"/><rect x="458" y="578" width="1" height="1"/><rect x="461" y="578" width="1" height="1"/><rect x="458" y="579" width="1" height="1"/><rect x="459" y="579" width="1" height="1"/><rect x="460" y="579" width="1" height="1"/><rect x="461" y="579" width="1" height="1"/><rect x="462" y="579" width="1" height="1"/><rect x="461" y="580" width="1" height="1"/><rect x="461" y="581" width="1" height="1"/><rect x="462" y="581" width="1" height="1"/><rect x="465" y="574" width="1" height="1"/><rect x="466" y="574" width="1" height="1"/><rect x="467" y="574" width="1" height="1"/><rect x="464" y="575" width="1" height="1"/><rect x="468" y="575" width="1" height="1"/><rect x="468" y="576" width="1" height="1"/><rect x="466" y="577" width="1" height="1"/><rect x="467" y="577" width="1" height="1"/><rect x="468" y="578" width="1" height="1"/><rect x="468" y="579" width="1" height="1"/><rect x="464" y="580" width="1" height="1"/><rect x="468" y="580" width="1" height="1"/><rect x="465" y="581" width="1" height="1"/><rect x="466" y="581" width="1" height="1"/><rect x="467" y="581" width="1" height="1"/><rect x="473" y="574" width="1" height="1"/><rect x="472" y="575" width="1" height="1"/><rect x="473" y="575" width="1" height="1"/><rect x="471" y="576" width="1" height="1"/><rect x="473" y="576" width="1" height="1"/><rect x="471" y="577" width="1" height="1"/><rect x="473" y="577" width="1" height="1"/><rect x="470" y="578" width="1" height="1"/><rect x="473" y="578" width="1" height="1"/><rect x="470" y="579" width="1" height="1"/><rect x="471" y="579" width="1" height="1"/><rect x="472" y="579" width="1" height="1"/><rect x="473" y="579" width="1" height="1"/><rect x="474" y="579" width="1" height="1"/><rect x="473" y="580" width="1" height="1"/><rect x="473" y="581" width="1" height="1"/><rect x="474" y="581" width="1" height="1"/><rect x="482" y="574" width="1" height="1"/><rect x="483" y="574" width="1" height="1"/><rect x="485" y="574" width="1" height="1"/><rect x="486" y="574" width="1" height="1"/><rect x="483" y="575" width="1" height="1"/><rect x="485" y="575" width="1" height="1"/><rect x="483" y="576" width="1" height="1"/><rect x="485" y="576" width="1" height="1"/><rect x="484" y="577" width="1" height="1"/><rect x="484" y="578" width="1" height="1"/><rect x="484" y="579" width="1" height="1"/><rect x="484" y="580" width="1" height="1"/><rect x="483" y="581" width="1" height="1"/><rect x="484" y="581" width="1" height="1"/><rect x="485" y="581" width="1" height="1"/><rect x="490" y="576" width="1" height="1"/><rect x="490" y="581" width="1" height="1"/><rect x="501" y="574" width="1" height="1"/><rect x="502" y="574" width="1" height="1"/><rect x="503" y="574" width="1" height="1"/><rect x="500" y="575" width="1" height="1"/><rect x="504" y="575" width="1" height="1"/><rect x="504" y="576" width="1" height="1"/><rect x="502" y="577" width="1" height="1"/><rect x="503" y="577" width="1" height="1"/><rect x="504" y="578" width="1" height="1"/><rect x="504" y="579" width="1" height="1"/><rect x="500" y="580" width="1" height="1"/><rect x="504" y="580" width="1" height="1"/><rect x="501" y="581" width="1" height="1"/><rect x="502" y="581" width="1" height="1"/><rect x="503" y="581" width="1" height="1"/><rect x="509" y="574" width="1" height="1"/><rect x="508" y="575" width="1" height="1"/><rect x="509" y="575" width="1" height="1"/><rect x="507" y="576" width="1" height="1"/><rect x="509" y="576" width="1" height="1"/><rect x="507" y="577" width="1" height="1"/><rect x="509" y="577" width="1" height="1"/><rect x="506" y="578" width="1" height="1"/><rect x="509" y="578" width="1" height="1"/><rect x="506" y="579" width="1" height="1"/><rect x="507" y="579" width="1" height="1"/><rect x="508" y="579" width="1" height="1"/><rect x="509" y="579" width="1" height="1"/><rect x="510" y="579" width="1" height="1"/><rect x="509" y="580" width="1" height="1"/><rect x="509" y="581" width="1" height="1"/><rect x="510" y="581" width="1" height="1"/><rect x="514" y="574" width="1" height="1"/><rect x="513" y="575" width="1" height="1"/><rect x="514" y="575" width="1" height="1"/><rect x="514" y="576" width="1" height="1"/><rect x="514" y="577" width="1" height="1"/><rect x="514" y="578" width="1" height="1"/><rect x="514" y="579" width="1" height="1"/><rect x="514" y="580" width="1" height="1"/><rect x="513" y="581" width="1" height="1"/><rect x="514" y="581" width="1" height="1"/><rect x="515" y="581" width="1" height="1"/><rect x="519" y="573" width="1" height="1"/><rect x="520" y="574" width="1" height="1"/><rect x="521" y="575" width="1" height="1"/><rect x="521" y="576" width="1" height="1"/><rect x="521" y="577" width="1" height="1"/><rect x="521" y="578" width="1" height="1"/><rect x="521" y="579" width="1" height="1"/><rect x="521" y="580" width="1" height="1"/><rect x="520" y="581" width="1" height="1"/><rect x="519" y="582" width="1" height="1"/></g></svg>
<div class="t" style="left:572px;top:573px;">请选择需要水平对齐的目标纵筋</div>
<svg class="a" style="left:0;top:0" width="955" height="598" shape-rendering="crispEdges"><rect x="517" y="219" width="159" height="2" fill="#ffffff"/><rect x="674" y="219" width="2" height="159" fill="#ffffff"/><rect x="596" y="376" width="80" height="2" fill="#ffffff"/><rect x="596" y="376" width="2" height="139" fill="#ffffff"/><rect x="517" y="513" width="81" height="2" fill="#ffffff"/><rect x="517" y="219" width="2" height="296" fill="#ffffff"/><rect x="518" y="204" width="161" height="1" fill="#00ff00"/><rect x="518" y="203" width="1" height="14" fill="#00ff00"/><rect x="675" y="203" width="1" height="14" fill="#00ff00"/><line x1="510.5" y1="213.5" x2="519.5" y2="204.5" stroke="#00ff00"/><line x1="667.5" y1="213.5" x2="678.5" y2="202.5" stroke="#00ff00"/><rect x="503" y="219" width="1" height="296" fill="#00ff00"/><rect x="492" y="220" width="23" height="1" fill="#00ff00"/><rect x="492" y="514" width="23" height="1" fill="#00ff00"/><line x1="495.5" y1="213.5" x2="512.5" y2="229.5" stroke="#00ff00"/><line x1="495.5" y1="507.5" x2="512.5" y2="523.5" stroke="#00ff00"/><rect x="691" y="220" width="1" height="158" fill="#00ff00"/><rect x="679" y="220" width="25" height="1" fill="#00ff00"/><rect x="679" y="377" width="25" height="1" fill="#00ff00"/><line x1="683.5" y1="212.5" x2="699.5" y2="228.5" stroke="#00ff00"/><line x1="683.5" y1="369.5" x2="699.5" y2="385.5" stroke="#00ff00"/><rect x="596" y="394" width="81" height="1" fill="#00ff00"/><rect x="597" y="381" width="1" height="24" fill="#00ff00"/><rect x="675" y="381" width="1" height="24" fill="#00ff00"/><line x1="589.5" y1="401.5" x2="606.5" y2="384.5" stroke="#00ff00"/><line x1="668.5" y1="401.5" x2="685.5" y2="384.5" stroke="#00ff00"/><rect x="612" y="377" width="1" height="138" fill="#00ff00"/><rect x="601" y="377" width="24" height="1" fill="#00ff00"/><rect x="601" y="514" width="24" height="1" fill="#00ff00"/><line x1="604.5" y1="369.5" x2="621.5" y2="385.5" stroke="#00ff00"/><line x1="604.5" y1="506.5" x2="621.5" y2="523.5" stroke="#00ff00"/><rect x="518" y="530" width="80" height="1" fill="#00ff00"/><rect x="518" y="518" width="1" height="25" fill="#00ff00"/><rect x="597" y="518" width="1" height="25" fill="#00ff00"/><line x1="511.5" y1="537.5" x2="528.5" y2="521.5" stroke="#00ff00"/><line x1="589.5" y1="537.5" x2="606.5" y2="521.5" stroke="#00ff00"/><line x1="512" y1="367.5" x2="684" y2="367.5" stroke="#8c8c8c" stroke-dasharray="9 3 3 3 3 3"/><line x1="597.5" y1="294" x2="597.5" y2="367" stroke="#8c8c8c" stroke-dasharray="9 3 3 3 3 3" stroke-dashoffset="4"/><line x1="675.5" y1="404" x2="675.5" y2="443" stroke="#8c8c8c" stroke-dasharray="9 3 3 3 3 3"/><polyline points="676,219.5 697,199 702,195 718,178" fill="none" stroke="#fff" stroke-width="1"/><rect x="528" y="230" width="4" height="3" fill="#ffff00"/><rect x="530" y="231" width="1" height="1" fill="#000"/><rect x="529" y="233" width="2" height="1" fill="#ffff00"/><rect x="583" y="230" width="4" height="3" fill="#ffff00"/><rect x="585" y="231" width="1" height="1" fill="#000"/><rect x="584" y="233" width="2" height="1" fill="#ffff00"/><rect x="661" y="230" width="4" height="3" fill="#ffff00"/><rect x="663" y="231" width="1" height="1" fill="#000"/><rect x="662" y="233" width="2" height="1" fill="#ffff00"/><rect x="528" y="363" width="4" height="3" fill="#ffff00"/><rect x="530" y="364" width="1" height="1" fill="#000"/><rect x="529" y="366" width="2" height="1" fill="#ffff00"/><rect x="583" y="363" width="4" height="3" fill="#ffff00"/><rect x="585" y="364" width="1" height="1" fill="#000"/><rect x="584" y="366" width="2" height="1" fill="#ffff00"/><rect x="661" y="363" width="4" height="3" fill="#ffff00"/><rect x="663" y="364" width="1" height="1" fill="#000"/><rect x="662" y="366" width="2" height="1" fill="#ffff00"/><rect x="528" y="500" width="4" height="3" fill="#ffff00"/><rect x="530" y="501" width="1" height="1" fill="#000"/><rect x="529" y="503" width="2" height="1" fill="#ffff00"/><rect x="583" y="500" width="4" height="3" fill="#ffff00"/><rect x="585" y="501" width="1" height="1" fill="#000"/><rect x="584" y="503" width="2" height="1" fill="#ffff00"/></svg>
<svg class="a" style="left:0;top:0" width="955" height="598"><g fill="none" stroke="#fff" stroke-width="1" shape-rendering="crispEdges"><path d="M476.5,364.5 L476.5,362.5 L482.5,362.5 L482.5,363.5 L479.5,367.5 L479.5,372.5"/><path d="M490.5,362.5 L484.5,362.5 L484.5,367.5 L489.5,367.5 L490.5,368.5 L490.5,371.5 L489.5,372.5 L485.5,372.5 L484.5,371.5"/><path d="M494.5,362.5 L495.5,362.5 L497.5,364.5 L497.5,370.5 L495.5,372.5 L494.5,372.5 L492.5,370.5 L492.5,364.5 Z"/></g><g fill="none" stroke="#fff" stroke-width="1" shape-rendering="crispEdges"><path d="M700.5,304.5 L700.5,294.5 L696.5,300.5 L696.5,301.5 L702.5,301.5 M698.5,304.5 L702.5,304.5"/><path d="M706.5,294.5 L707.5,294.5 L709.5,296.5 L709.5,302.5 L707.5,304.5 L706.5,304.5 L704.5,302.5 L704.5,296.5 Z"/><path d="M714.5,294.5 L715.5,294.5 L717.5,296.5 L717.5,302.5 L715.5,304.5 L714.5,304.5 L712.5,302.5 L712.5,296.5 Z"/></g><g fill="none" stroke="#fff" stroke-width="1" shape-rendering="crispEdges"><path d="M625.5,405.5 L625.5,404.5 L626.5,403.5 L630.5,403.5 L631.5,404.5 L631.5,406.5 L625.5,412.5 L625.5,413.5 L631.5,413.5 L631.5,412.5"/><path d="M635.5,403.5 L636.5,403.5 L638.5,405.5 L638.5,411.5 L636.5,413.5 L635.5,413.5 L633.5,411.5 L633.5,405.5 Z"/><path d="M643.5,403.5 L644.5,403.5 L646.5,405.5 L646.5,411.5 L644.5,413.5 L643.5,413.5 L641.5,411.5 L641.5,405.5 Z"/></g><g fill="none" stroke="#fff" stroke-width="1" shape-rendering="crispEdges"><path d="M617.5,442.5 L618.5,441.5 L622.5,441.5 L623.5,442.5 L623.5,445.5 L622.5,446.5 L619.5,446.5 M622.5,446.5 L623.5,447.5 L623.5,450.5 L622.5,451.5 L618.5,451.5 L617.5,450.5"/><path d="M631.5,441.5 L625.5,441.5 L625.5,446.5 L630.5,446.5 L631.5,447.5 L631.5,450.5 L630.5,451.5 L626.5,451.5 L625.5,450.5"/><path d="M635.5,441.5 L636.5,441.5 L638.5,443.5 L638.5,449.5 L636.5,451.5 L635.5,451.5 L633.5,449.5 L633.5,443.5 Z"/></g><g fill="none" stroke="#fff" stroke-width="1" shape-rendering="crispEdges"><path d="M547.5,544.5 L547.5,543.5 L548.5,542.5 L552.5,542.5 L553.5,543.5 L553.5,545.5 L547.5,551.5 L547.5,552.5 L553.5,552.5 L553.5,551.5"/><path d="M557.5,542.5 L558.5,542.5 L560.5,544.5 L560.5,550.5 L558.5,552.5 L557.5,552.5 L555.5,550.5 L555.5,544.5 Z"/><path d="M565.5,542.5 L566.5,542.5 L568.5,544.5 L568.5,550.5 L566.5,552.5 L565.5,552.5 L563.5,550.5 L563.5,544.5 Z"/></g><g fill="none" stroke="#00ff00" stroke-width="1" shape-rendering="crispEdges"><path d="M789.5,174.5 L793.5,174.5 L794.5,175.5 L794.5,178.5 L793.5,179.5 L789.5,179.5 L788.5,178.5 L788.5,175.5 Z M789.5,179.5 L788.5,180.5 L788.5,183.5 L789.5,184.5 L793.5,184.5 L794.5,183.5 L794.5,180.5 L793.5,179.5"/><path d="M796.5,174.5 L801.5,174.5 L802.5,175.5 L802.5,178.5 L801.5,179.5 L797.5,179.5 M801.5,179.5 L802.5,180.5 L802.5,183.5 L801.5,184.5 L796.5,184.5 M797.5,174.5 L797.5,184.5"/><path d="M805.5,175.5 L807.5,174.5 L807.5,184.5 M805.5,184.5 L809.5,184.5"/><path d="M812.5,176.5 L812.5,175.5 L813.5,174.5 L817.5,174.5 L818.5,175.5 L818.5,177.5 L812.5,183.5 L812.5,184.5 L818.5,184.5 L818.5,183.5"/></g></svg>
<div class="a" style="left:598px;top:367px;font-family:'Liberation Sans',sans-serif;font-size:10px;line-height:10px;color:#3a4a6a">0</div>
<div class="a" style="left:718px;top:172px;font-family:'Liberation Sans',sans-serif;font-size:16px;line-height:16px;color:#fff">全部纵筋</div>
<div class="a" style="left:820px;top:502px;width:98px;height:57px;background:#080808"></div>
<div class="a" style="left:430px;top:142px;width:254px;height:60px;border-radius:7px;background:linear-gradient(#4a4646,#3a3838 50%,#423f3f);border:1px solid #a8a0a0"></div>
<div class="a" style="left:434px;top:146px;width:246px;height:52px;border-radius:2px;border:1px solid #8a8686;background:#2e2e2e"></div>
<div class="a" style="left:436px;top:147px;width:243px;height:49px;background:#f0f0f0;border:1px solid #e8e8e8"></div>
<div class="a" style="left:437px;top:148px;width:241px;height:20px;background:linear-gradient(#c9d7e5,#d6e2ef)"></div>
<div class="a" style="left:437px;top:148px;width:241px;height:20px;overflow:hidden"><div class="t" style="left:3px;top:11px;color:#777">特殊布筋</div></div>
<div class="a" style="left:441px;top:171px;width:58px;height:23px;border:1px solid #b4b4b4;border-right-color:#fff;border-bottom-color:#fff;background:#f8f8f8"></div>
<div class="t" style="left:447px;top:177px;">对齐布筋</div>
<div class="t" style="left:504px;top:177px;">点式布筋</div>
<div class="t" style="left:562px;top:177px;">比例布筋</div>
<div class="t" style="left:620px;top:177px;">偏移布筋</div>
<svg class="a" style="left:910px;top:574px" width="16" height="14"><g stroke="#a4a4a4" stroke-width="1.2"><path d="M3 12.5 L14 1.5"/><path d="M7 12.5 L14 5.5"/><path d="M11 12.5 L14 9.5"/></g></svg>
<svg class="a" style="left:800px;top:530px" width="155" height="68" viewBox="800 530 155 68">
<defs><clipPath id="wc"><path d="M839 600 C838 578 847 565 872 563 C897 565 907 578 906 600 Z"/></clipPath>
<linearGradient id="wg" x1="0" x2="1"><stop offset="0" stop-color="#3e8e2a"/><stop offset="0.45" stop-color="#7cc444"/><stop offset="1" stop-color="#3e8e2a"/></linearGradient></defs>
<path d="M839 600 C838 578 847 565 872 563 C897 565 907 578 906 600 Z" fill="url(#wg)"/>
<g clip-path="url(#wc)" stroke="#1c5a22" stroke-width="2.6" fill="none">
<path d="M845 566 l-2 4 2 4 -3 4 2 4 -3 4 2 4 -2 4 1 6"/>
<path d="M855 563 l2 4 -3 4 2 4 -3 4 2 4 -3 4 2 4 -2 6"/>
<path d="M866 562 l2 4 -3 4 2 4 -3 4 2 4 -3 4 2 4 -2 6"/>
<path d="M878 562 l2 4 -3 4 2 4 -3 4 2 4 -3 4 2 4 -2 6"/>
<path d="M890 565 l-2 4 3 4 -2 4 3 4 -2 4 3 4 -2 4 2 6"/>
<path d="M901 570 l-2 4 3 4 -2 4 3 4 -2 4 2 6"/>
</g>
<path d="M852 565 Q857 556 870 554 Q887 553 895 562 Q898 569 896 576 L894 598 L892 598 L892 578 Q886 571 876 570 Q864 569 857 569 Z" fill="#f7f3f3"/>
<path d="M852 565 Q857 556 870 554 Q887 553 895 562 Q898 569 896 576 L894 598" fill="none" stroke="#8a3020" stroke-width="0.9"/>
<path d="M871 557 Q871 564 878 565 Q886 565 889 564" fill="none" stroke="#7a2a1a" stroke-width="1.1"/>
<circle cx="858" cy="563" r="2.2" fill="#c4c4c4"/><circle cx="865" cy="560" r="1.6" fill="#c4c4c4"/>
<path d="M864 555 q6 -5 16 -3 q2 4 -3 5 q-7 0 -13 -2z" fill="#e0665a"/>
<path d="M876 555 q8 1 12 7 l-2 2 q-6 -3 -10 -6z" fill="#3f9e2c"/>
<path d="M868 578 q7 -3 15 -1 q1 4 -6 6 q-7 1 -9 -5z" fill="#e0665a"/>
<path d="M851 557 q5 -5 10 -1 l0 7 q-6 2 -10 -1z" fill="#3c9a2a"/>
<path d="M853 556 l3 -1 2 2" stroke="#1f5e24" stroke-width="1.5" fill="none"/>
<path d="M910 561 q6 -3 10 2 l-1 7 q-5 3 -10 -1z" fill="#48a030"/>
<path d="M914 562 l5 2 0 6 -3 1z" fill="#1f5e24"/>
<path d="M824 566 q5 -3 9 0 l0 5 q-5 3 -10 1z" fill="#3c9a2a"/>
<path d="M826 566 l2 5" stroke="#1f5e24" stroke-width="1.2"/>
<circle cx="837" cy="553" r="1.8" fill="#d8605a"/>
<path d="M837 561 l5 -1 1 3 -4 2z" fill="#d8605a"/>
<path d="M822 577 l2 -1 3 5 -2 2z" fill="#d8605a"/>
<path d="M884 545 l7 6 -1 2 -7 -5z" fill="#e0665a"/>
<path d="M884 545 l6 5" stroke="#3c9a2a" stroke-width="1.2"/>
<circle cx="895" cy="555" r="1.8" fill="#3c9a2a"/>
<circle cx="926" cy="572" r="1.6" fill="#3c9a2a"/>
<path d="M909 571 q3 -1 3 3 l-2 3 q-2 -2 -1 -6z" fill="#d8605a"/>
<path d="M897 566 l3 -3 2 3 -3 2z" fill="#d8605a"/>
<g stroke="#8acc5a" stroke-width="1" fill="none"><path d="M912 590 q10 -6 22 0"/></g>
<g fill="#62b434"><path d="M906 598 q2 -6 7 -8 q1 5 -3 8z"/><path d="M912 598 q3 -7 8 -8 q0 6 -4 8z"/><path d="M919 598 q3 -6 7 -6 q0 5 -4 6z"/><path d="M914 594 q3 -4 6 -3 l-3 4z"/><path d="M925 594 q3 -4 7 -3 l-4 4z"/></g>
<g fill="#9ad468"><path d="M909 596 q2 -3 4 -3 l-1 4z"/><path d="M922 596 q2 -3 5 -3 l-2 4z"/><path d="M930 592 l4 -2 -1 4z"/></g>
</svg>
</body></html>
